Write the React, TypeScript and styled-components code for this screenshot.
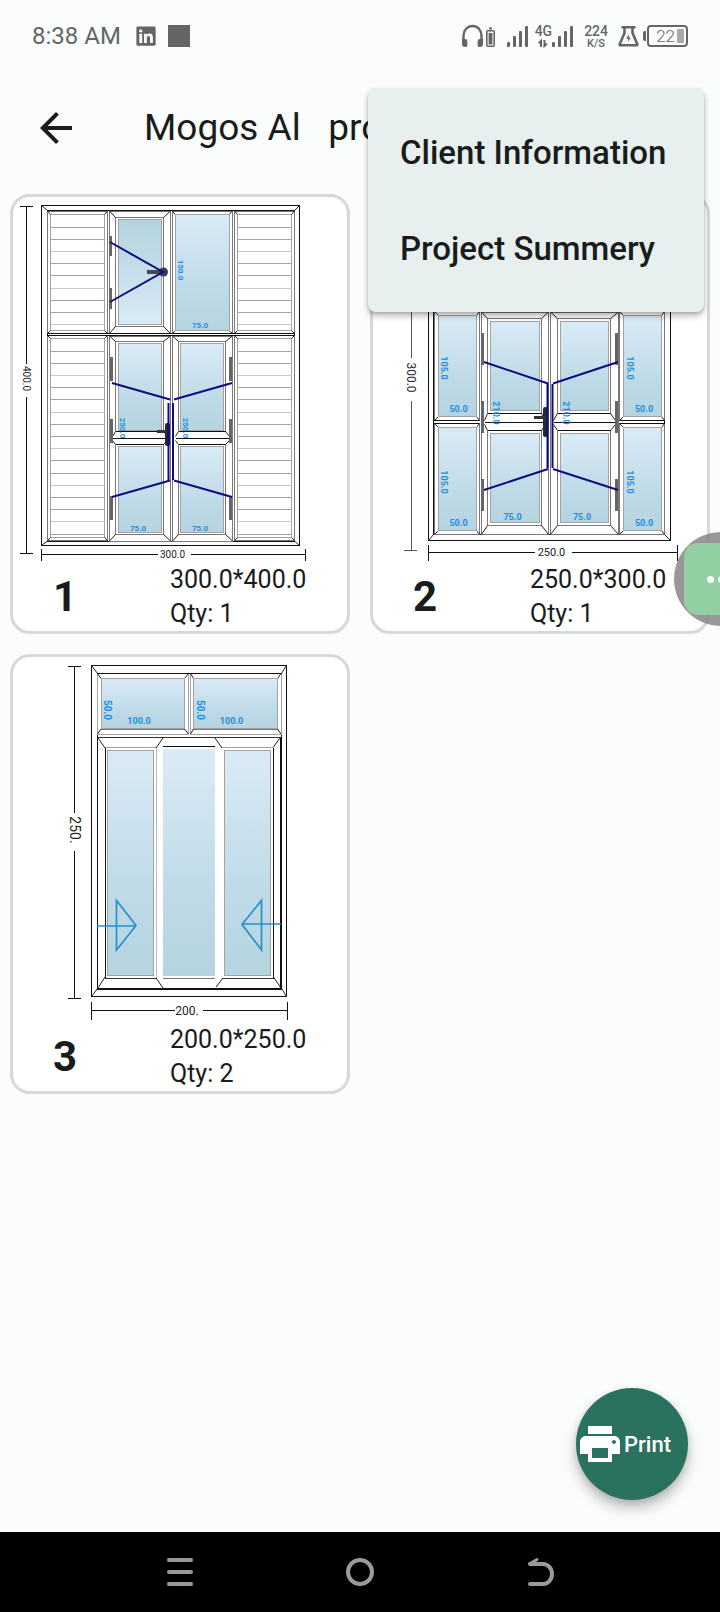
import React from "react";
import styled, { createGlobalStyle } from "styled-components";
import { MdArrowBack, MdPrint } from "react-icons/md";
import { FaLinkedin } from "react-icons/fa";

const GlobalStyle = createGlobalStyle`
  *, *::before, *::after { box-sizing: border-box; }
  body { margin: 0; background: #fbfdfc; font-family: Roboto, "Liberation Sans", sans-serif; color: #191c1b; }
  button { font: inherit; color: inherit; border: 0; padding: 0; background: none; cursor: pointer; }
`;

const Screen = styled.div`
  position: relative;
  display: flex;
  flex-direction: column;
  min-height: 100vh;
  overflow: hidden;
  background: #fbfdfc;
`;

const StatusBar = styled.div`
  display: flex;
  align-items: center;
  justify-content: space-between;
  height: 72px;
  padding: 0 32px;
  color: #646665;
`;

const StatusGroup = styled.div<{ $gap: number }>`
  display: flex;
  align-items: center;
  gap: ${(p) => p.$gap}px;
`;

const Clock = styled.time`
  margin-right: 3px;
  font-size: 24px;
  line-height: 28px;
`;

const AppSquare = styled.span`
  width: 22px;
  height: 22px;
  background: #646665;
`;

const Stacked = styled.div`
  display: flex;
  flex-direction: column;
  align-items: center;
  padding-top: 2px;
  font-weight: 500;
  font-size: 14px;
  line-height: 14px;
`;

const Small = styled.span`
  font-size: 11px;
  line-height: 12px;
`;

const Battery = styled.div`
  display: flex;
  align-items: center;
  justify-content: flex-end;
  gap: 2px;
  width: 41px;
  height: 22px;
  margin-left: 4px;
  padding: 0 2px;
  border: 2px solid #646665;
  border-radius: 4px;
  font-size: 17px;
  line-height: 18px;
  font-weight: 300;
  position: relative;

  &::before {
    content: "";
    position: absolute;
    left: -6px;
    top: 4px;
    width: 3px;
    height: 10px;
    border-radius: 2px 0 0 2px;
    background: #646665;
  }

  &::after {
    content: "";
    width: 7px;
    height: 14px;
    background: #a9abaa;
  }
`;

const AppBar = styled.header`
  display: flex;
  align-items: center;
  gap: 64px;
  height: 112px;
  padding: 0 32px;
`;

const IconButton = styled.button`
  display: flex;
  flex: none;
  align-items: center;
  justify-content: center;
`;

const Title = styled.h1`
  margin: 0;
  font-size: 37px;
  line-height: 44px;
  font-weight: 400;
  white-space: pre;
  overflow: hidden;
`;

const Menu = styled.div`
  position: absolute;
  z-index: 3;
  top: 88px;
  right: 16px;
  display: flex;
  flex-direction: column;
  width: 336px;
  padding: 16px 0;
  border-radius: 8px;
  background: #e7f0ef;
  box-shadow: 0 4px 6px rgba(0, 0, 0, 0.28), 0 1px 3px rgba(0, 0, 0, 0.12);
`;

const MenuItem = styled.button`
  height: 96px;
  padding: 0 32px;
  font-size: 33px;
  font-weight: 500;
  text-align: left;
  white-space: nowrap;
`;

const Content = styled.main`
  flex: 1;
  display: grid;
  grid-template-columns: 1fr 1fr;
  align-content: start;
  gap: 20px;
  padding: 10px 10px 40px;
`;

const Card = styled.article`
  display: flex;
  flex-direction: column;
  border: 3px solid #d7d9d8;
  border-radius: 20px;
  background: #fff;
  overflow: hidden;
`;

const Drawing = styled.svg`
  display: block;
  width: 100%;
  height: 366px;
  font-family: Roboto, "Liberation Sans", sans-serif;
`;

const CardFooter = styled.div`
  display: grid;
  grid-template-columns: 47% 1fr;
  align-items: center;
`;

const CardNumber = styled.strong`
  padding-left: 40px;
  font-size: 42px;
  line-height: 48px;
  font-weight: 700;
`;

const CardLine = styled.div`
  font-size: 25px;
  line-height: 34px;
  white-space: nowrap;
`;

const Bubble = styled.button`
  position: absolute;
  z-index: 2;
  top: 532px;
  right: -48px;
  display: flex;
  align-items: center;
  justify-content: center;
  width: 94px;
  height: 94px;
  border-radius: 50%;
  background: rgba(130, 128, 128, 0.82);
`;

const BubbleFace = styled.span`
  display: flex;
  align-items: center;
  justify-content: center;
  gap: 4px;
  width: 74px;
  height: 72px;
  border-radius: 14px;
  background: #92cfa3;
`;

const Dot = styled.span`
  width: 7px;
  height: 7px;
  border-radius: 50%;
  background: #fff;
`;

const PrintButton = styled.button`
  position: absolute;
  z-index: 2;
  right: 32px;
  bottom: 112px;
  display: flex;
  align-items: center;
  width: 112px;
  height: 112px;
  border-radius: 50%;
  background: #2a725f;
  color: #fff;
  font-size: 22px;
  font-weight: 500;
  box-shadow: 0 8px 14px rgba(0, 0, 0, 0.26), 0 2px 6px rgba(0, 0, 0, 0.1);

  svg { flex: none; }
`;

const SystemNav = styled.nav`
  display: grid;
  grid-template-columns: repeat(3, 1fr);
  height: 80px;
  padding: 0 12.5%;
  background: #000;
`;

/* ---------- Drawing parts ---------- */

type Box = { x1: number; y1: number; x2: number; y2: number };

const INK = "#111";
const MID = "#777";
const SOFT = "#a3a3a3";
const BLUE = "#1e90dc";
const NAVY = "#120a80";

const Outline = ({ x1, y1, x2, y2, c = INK }: Box & { c?: string }) => (
  <rect x={x1} y={y1} width={x2 - x1} height={y2 - y1} fill="none" stroke={c} shapeRendering="crispEdges" />
);

const Seg = ({ x1, y1, x2, y2, c = INK, w = 1 }: Box & { c?: string; w?: number }) => (
  <line x1={x1} y1={y1} x2={x2} y2={y2} stroke={c} strokeWidth={w} shapeRendering={x1 === x2 || y1 === y2 ? "crispEdges" : "auto"} />
);

const Glass = ({ x1, y1, x2, y2, flip, bare }: Box & { flip?: boolean; bare?: boolean }) => (
  <rect x={x1} y={y1} width={x2 - x1} height={y2 - y1} fill={flip ? "url(#glassUp)" : "url(#glassDown)"} stroke={bare ? "none" : SOFT} strokeWidth={1} shapeRendering="crispEdges" />
);

/* Mitred border: outer and inner rectangles joined at the corners. */
const Mitre = ({ o, i, oc = INK, ic = INK }: { o: Box; i: Box; oc?: string; ic?: string }) => (
  <g>
    <Outline {...o} c={oc} />
    <Outline {...i} c={ic} />
    <path
      d={`M${o.x1} ${o.y1}L${i.x1} ${i.y1}M${o.x2} ${o.y1}L${i.x2} ${i.y1}M${o.x1} ${o.y2}L${i.x1} ${i.y2}M${o.x2} ${o.y2}L${i.x2} ${i.y2}`}
      stroke="#222"
      strokeWidth="1"
      fill="none"
    />
  </g>
);

const box = (x1: number, y1: number, x2: number, y2: number): Box => ({ x1, y1, x2, y2 });

const Tag = ({ x, y, t, size = 8, turn, c = BLUE, weight = 700 }: { x: number; y: number; t: string; size?: number; turn?: boolean; c?: string; weight?: number }) => (
  <text
    x={x}
    y={y}
    transform={turn ? `rotate(90 ${x} ${y})` : undefined}
    fontSize={size}
    fontWeight={weight}
    fill={c}
    textAnchor="middle"
    dominantBaseline="central"
  >
    {t}
  </text>
);

const DimV = ({ x, y1, y2, g1, g2, t, size, c = INK }: { x: number; y1: number; y2: number; g1: number; g2: number; t: string; size: number; c?: string }) => (
  <g>
    <Seg x1={x} y1={y1} x2={x} y2={g1} c={c} />
    <Seg x1={x} y1={g2} x2={x} y2={y2} c={c} />
    <Seg x1={x - 7} y1={y1} x2={x + 6} y2={y1} c={c} />
    <Seg x1={x - 7} y1={y2} x2={x + 6} y2={y2} c={c} />
    <Tag x={x} y={(g1 + g2) / 2 - 2} t={t} size={size} turn c="#222" weight={400} />
  </g>
);

const DimH = ({ y, x1, x2, g1, g2, t, size, h = 7 }: { y: number; x1: number; x2: number; g1: number; g2: number; t: string; size: number; h?: number }) => (
  <g>
    <Seg x1={x1} y1={y} x2={g1} y2={y} />
    <Seg x1={g2} y1={y} x2={x2} y2={y} />
    <Seg x1={x1} y1={y - h} x2={x1} y2={y + h} />
    <Seg x1={x2} y1={y - h} x2={x2} y2={y + h} />
    <Tag x={(g1 + g2) / 2 - 2} y={y} t={t} size={size} c="#222" weight={400} />
  </g>
);

const Louver = ({ o, i, step = 12.2 }: { o: Box; i: Box; step?: number }) => {
  const rows: number[] = [];
  for (let y = i.y1 + step; y < i.y2 - 2; y += step) rows.push(Math.round(y));
  return (
    <g>
      <Mitre o={o} i={i} oc={MID} ic={SOFT} />
      {rows.map((y, n) => (
        <Seg key={y} x1={i.x1} y1={y} x2={i.x2} y2={y} c={n % 3 === 2 ? "#c8c8c8" : SOFT} />
      ))}
    </g>
  );
};

const Hinge = ({ x, y, h }: { x: number; y: number; h: number }) => (
  <rect x={x} y={y} width={3} height={h} fill="#666" />
);

const Fold = ({ d }: { d: string }) => <path d={d} fill="none" stroke={NAVY} strokeWidth="2" />;

const DoorLeaf = ({ o, i, gx1, gx2, gy, rail, hingeX, hinges, hingeH }: {
  o: Box; i: Box; gx1: number; gx2: number; gy: number[]; rail: number[]; hingeX: number; hinges: number[]; hingeH: number;
}) => (
  <g>
    <Mitre o={o} i={i} oc={MID} ic={MID} />
    <rect x={i.x1 - 3} y={rail[0]} width={i.x2 - i.x1 + 6} height={rail[2] - rail[0]} fill="#fff" />
    <Seg x1={i.x1} y1={rail[0]} x2={i.x2} y2={rail[0]} />
    <Seg x1={o.x1 + 3} y1={rail[1]} x2={o.x2 - 3} y2={rail[1]} />
    <Seg x1={i.x1} y1={rail[2]} x2={i.x2} y2={rail[2]} />
    <path
      d={`M${i.x1} ${rail[0]}L${o.x1 + 3} ${rail[1] - 2}M${i.x2} ${rail[0]}L${o.x2 - 3} ${rail[1] - 2}M${i.x1} ${rail[2]}L${o.x1 + 3} ${rail[1] + 2}M${i.x2} ${rail[2]}L${o.x2 - 3} ${rail[1] + 2}`}
      stroke="#222"
    />
    <Glass x1={gx1} y1={gy[0]} x2={gx2} y2={gy[1]} />
    <Glass x1={gx1} y1={gy[2]} x2={gx2} y2={gy[3]} />
    {hinges.map((y) => <Hinge key={y} x={hingeX} y={y} h={hingeH} />)}
  </g>
);

const GlassDefs = () => (
  <defs>
    <linearGradient id="glassDown" x1="0" y1="0" x2="0" y2="1">
      <stop offset="0" stopColor="#daebf6" />
      <stop offset="0.65" stopColor="#bedae7" />
      <stop offset="1" stopColor="#b6d3e0" />
    </linearGradient>
    <linearGradient id="glassUp" x1="0" y1="1" x2="0" y2="0">
      <stop offset="0" stopColor="#daebf6" />
      <stop offset="0.65" stopColor="#bedae7" />
      <stop offset="1" stopColor="#b6d3e0" />
    </linearGradient>
  </defs>
);

const LouverDoor = () => (
  <Drawing viewBox="13 197 334 366" role="img" aria-label="Door with louvers, 300 by 400">
    <GlassDefs />
    <Mitre o={box(41.5, 205.5, 299.5, 545.5)} i={box(47.5, 210.5, 294.5, 541)} />
    <Louver o={box(47.5, 211, 107.5, 333.5)} i={box(50.5, 214.5, 104.5, 330.5)} />
    <Louver o={box(234.5, 211, 294.5, 333.5)} i={box(237.5, 214.5, 291.5, 330.5)} />
    <Louver o={box(47.5, 335.5, 107.5, 540.5)} i={box(50.5, 338.5, 104.5, 537.5)} />
    <Louver o={box(234.5, 335.5, 294.5, 540.5)} i={box(237.5, 338.5, 291.5, 537.5)} />

    <Mitre o={box(109.5, 211, 170.5, 333.5)} i={box(115.5, 217.5, 163.5, 326.5)} oc={MID} ic={MID} />
    <Glass x1={118.5} y1={219.5} x2={161.5} y2={324.5} flip />
    <Mitre o={box(172.5, 211, 232.5, 333.5)} i={box(175, 214.5, 229, 330.5)} oc={MID} ic={SOFT} />
    <Glass x1={175} y1={214.5} x2={229} y2={330.5} />
    <Seg x1={47} y1={333.5} x2={295} y2={333.5} />
    <Seg x1={47} y1={335.5} x2={295} y2={335.5} />
    <Hinge x={109} y={236} h={20} />
    <Hinge x={109} y={288} h={21} />
    <rect x="147" y="270" width="14" height="4" fill="#444b50" />
    <circle cx="163.5" cy="272" r="4.5" fill="#3a3a5c" />
    <Fold d="M110 242L163 272L110 302" />

    <DoorLeaf o={box(109.5, 336, 170.5, 541)} i={box(115.5, 341.5, 163.5, 534.5)} gx1={118.5} gx2={161.5} gy={[343.5, 430, 446.5, 532.5]} rail={[431.5, 438.5, 444.5]} hingeX={110} hinges={[357, 419, 496]} hingeH={24} />
    <DoorLeaf o={box(172.5, 336, 232.5, 541)} i={box(178.5, 341.5, 225.5, 534.5)} gx1={180.5} gx2={223.5} gy={[343.5, 430, 446.5, 532.5]} rail={[431.5, 438.5, 444.5]} hingeX={229} hinges={[357, 419, 496]} hingeH={24} />
    <Fold d="M112 383L170 399.5M112 497L170 480.5M174 399.5L232 383M174 480.5L232 497" />
    <rect x="165" y="423" width="5" height="23" rx="2" fill="#26263c" />
    <rect x="157" y="430" width="10" height="3" fill="#333" />
    <Fold d="M168.5 403V480M173 403V480" />

    <Tag x={180.5} y={270} t="150.0" turn />
    <Tag x={200} y={325} t="75.0" />
    <Tag x={122.5} y={428} t="250.0" turn />
    <Tag x={185} y={428} t="250.0" turn />
    <Tag x={138} y={528} t="75.0" />
    <Tag x={200} y={528} t="75.0" />
    <DimV x={26.5} y1={206} y2={553.5} g1={364} g2={397} t="400.0" size={10} />
    <DimH y={554.5} x1={41.5} x2={305.5} g1={158} g2={191} t="300.0" size={10} h={6} />
  </Drawing>
);

const SidePane = ({ x, top, bottom }: { x: number; top: number; bottom: number }) => (
  <g>
    <Mitre o={box(x, top, x + 45, bottom)} i={box(x + 4, top + 4, x + 42, bottom - 4)} oc={MID} ic={MID} />
    <Glass x1={x + 4} y1={top + 4} x2={x + 42} y2={bottom - 4} />
  </g>
);

const DoubleDoor = () => (
  <Drawing viewBox="373 197 334 366" role="img" aria-label="Double door, 250 by 300">
    <GlassDefs />
    <Mitre o={box(428.5, 205.5, 670.5, 540.5)} i={box(433.5, 211.5, 664.5, 534.5)} />
    <Glass x1={439} y1={216.5} x2={660} y2={306} />
    <SidePane x={434.5} top={311.5} bottom={420.5} />
    <SidePane x={434.5} top={423.5} bottom={534.5} />
    <SidePane x={619.5} top={311.5} bottom={420.5} />
    <SidePane x={619.5} top={423.5} bottom={534.5} />
    <Seg x1={434} y1={420.5} x2={479} y2={420.5} />
    <Seg x1={434} y1={423.5} x2={479} y2={423.5} />
    <Seg x1={620} y1={420.5} x2={665} y2={420.5} />
    <Seg x1={620} y1={423.5} x2={665} y2={423.5} />
    <DoorLeaf o={box(481.5, 312, 548.5, 534.5)} i={box(487.5, 318.5, 541.5, 525.5)} gx1={490.5} gx2={539.5} gy={[321.5, 410.5, 433.5, 522.5]} rail={[413.5, 422.5, 430.5]} hingeX={481} hinges={[333, 401, 479]} hingeH={32} />
    <DoorLeaf o={box(550.5, 312, 618.5, 534.5)} i={box(557.5, 318.5, 610.5, 525.5)} gx1={560.5} gx2={608.5} gy={[321.5, 410.5, 433.5, 522.5]} rail={[413.5, 422.5, 430.5]} hingeX={615} hinges={[333, 401, 479]} hingeH={32} />
    <Fold d="M484 362L548 383.5M484 490L548 469M553 383.5L618 362M553 469L618 490" />
    <rect x="543" y="407" width="5" height="30" rx="2" fill="#26263c" />
    <rect x="534" y="416" width="12" height="3" fill="#333" />
    <Fold d="M547.5 384V468M552.5 384V468" />

    {[368, 482].map((y) => (
      <g key={y}>
        <Tag x={444} y={y} t="105.0" size={9} turn />
        <Tag x={630} y={y} t="105.0" size={9} turn />
        <Tag x={458.5} y={y + 41} t="50.0" size={9} />
        <Tag x={644} y={y + 41} t="50.0" size={9} />
      </g>
    ))}
    <Tag x={496} y={413} t="210.0" size={9} turn />
    <Tag x={565.5} y={413} t="210.0" size={9} turn />
    <Tag x={512.5} y={517} t="75.0" size={9} />
    <Tag x={582} y={517} t="75.0" size={9} />
    <DimV x={411} y1={206} y2={550.5} g1={358} g2={401} t="300.0" size={12} c="#555" />
    <DimH y={552.5} x1={428.5} x2={677.5} g1={535} g2={572} t="250.0" size={11} h={8} />
  </Drawing>
);

const SlidingWindow = () => (
  <Drawing viewBox="13 657 334 366" role="img" aria-label="Sliding window, 200 by 250">
    <GlassDefs />
    <Mitre o={box(91.5, 665.5, 286.5, 996.5)} i={box(97.5, 673.5, 281.5, 988.5)} />
    <Seg x1={97} y1={988.5} x2={282} y2={988.5} w={2} />
    <Seg x1={281} y1={737} x2={281} y2={989} w={2} />
    <Mitre o={box(97.5, 673.5, 188.5, 734)} i={box(101, 678.5, 184.5, 729)} oc={SOFT} ic={MID} />
    <Mitre o={box(190.5, 673.5, 281, 734)} i={box(193.5, 678.5, 277.5, 729)} oc={SOFT} ic={MID} />
    <Seg x1={97} y1={673.5} x2={282} y2={673.5} />
    <Glass x1={101.5} y1={678.5} x2={184.5} y2={728.5} />
    <Glass x1={193.5} y1={678.5} x2={277.5} y2={728.5} />
    <Seg x1={97} y1={737.5} x2={281} y2={737.5} c="#333" />

    <Seg x1={105} y1={747} x2={105} y2={978} />
    <Seg x1={273.5} y1={747} x2={273.5} y2={978} />
    <Seg x1={105} y1={747} x2={156.5} y2={747} c={SOFT} />
    <Seg x1={222} y1={747} x2={273.5} y2={747} c={SOFT} />
    <Seg x1={105} y1={978} x2={156.5} y2={978} c="#333" />
    <Seg x1={222.5} y1={978} x2={273.5} y2={978} c="#333" />
    <Seg x1={156.5} y1={747} x2={156.5} y2={978} c="#bbb" />
    <Seg x1={163} y1={746.5} x2={215} y2={746.5} />
    <Seg x1={163} y1={978} x2={215} y2={978} c={MID} />
    <path d="M98 738L105 748M163 738L156 748M215 738L222 748M280 738L273.5 747M98 988L105 977M156 978L163 988M223 978L216 987M273.5 977L281 988" stroke="#222" />
    <Glass x1={107.5} y1={750.5} x2={153.5} y2={975} />
    <Glass x1={163} y1={749} x2={215} y2={975.5} bare />
    <Glass x1={224.5} y1={750.5} x2={270.5} y2={975} />
    <path d="M116.5 900.5V950L136 925.5ZM97 926H136M261.5 900.5V950L242 924.5ZM281 924H242" fill="none" stroke="#2590cc" strokeWidth="1.7" />

    <Tag x={107.5} y={710} t="50.0" size={10} turn />
    <Tag x={200.5} y={710} t="50.0" size={10} turn />
    <Tag x={139} y={721} t="100.0" size={9} />
    <Tag x={231.5} y={721} t="100.0" size={9} />
    <DimV x={74.5} y1={666.5} y2={998.5} g1={813} g2={851} t="250." size={14} />
    <DimH y={1010.5} x1={91.5} x2={287.5} g1={175} g2={203} t="200." size={12} h={9} />
  </Drawing>
);

/* ---------- Status and navigation glyphs ---------- */

const SignalIcon = () => (
  <svg width="22" height="22" viewBox="0 0 22 22" fill="#646665" aria-hidden="true">
    <rect x="0" y="17" width="3" height="5" rx="1" />
    <rect x="6" y="11" width="3" height="11" rx="1" />
    <rect x="12" y="6" width="3" height="16" rx="1" />
    <rect x="18" y="1" width="3" height="21" rx="1" />
  </svg>
);

const HeadphoneIcon = () => (
  <svg width="36" height="24" viewBox="0 0 36 24" fill="none" stroke="#646665" aria-hidden="true">
    <path d="M2.5 17V11.5a9 9.5 0 0 1 18 0V17" strokeWidth="2.4" />
    <path d="M1 15h3a2.4 2.4 0 0 1 2.4 2.4v3A2.4 2.4 0 0 1 4 23a3 3 0 0 1-3-3zM22 15h-3a2.4 2.4 0 0 0-2.4 2.4v3A2.4 2.4 0 0 0 19 23a3 3 0 0 0 3-3z" fill="#646665" stroke="none" />
    <rect x="25.8" y="6.8" width="7.4" height="15.4" rx="1" strokeWidth="1.6" />
    <path d="M28 4.5h3" strokeWidth="2" />
    <rect x="27.6" y="9" width="3.8" height="11.5" fill="#646665" stroke="none" />
  </svg>
);

const FlaskIcon = () => (
  <svg width="21" height="22" viewBox="0 0 21 22" fill="none" stroke="#646665" aria-hidden="true">
    <path d="M4.5 2.2H16.5" strokeWidth="2.4" strokeLinecap="round" />
    <path d="M6.5 2.5V8L2 18.5a1 1 0 0 0 1 1.7H18a1 1 0 0 0 1-1.7L14.5 8V2.5" strokeWidth="2.6" strokeLinejoin="round" />
    <path d="M11.2 9L8 13.8h2.2L9.8 17l3-4.4H10.8z" fill="#646665" stroke="none" />
  </svg>
);

const DataArrows = () => (
  <svg width="10" height="12" viewBox="0 -2 10 12" fill="none" stroke="#646665" strokeWidth="2" aria-hidden="true">
    <path d="M0.8 3.2L3 1V7M6.5 0V6L9 3.6" />
  </svg>
);

const cards = [
  { n: 1, size: "300.0*400.0", qty: 1, Picture: LouverDoor },
  { n: 2, size: "250.0*300.0", qty: 1, Picture: DoubleDoor },
  { n: 3, size: "200.0*250.0", qty: 2, Picture: SlidingWindow },
];

export default function App() {
  return (
    <>
      <GlobalStyle />
      <Screen>
        <StatusBar>
          <StatusGroup $gap={11}>
            <Clock>8:38 AM</Clock>
            <FaLinkedin size={22} />
            <AppSquare />
          </StatusGroup>
          <StatusGroup $gap={10}>
            <HeadphoneIcon />
            <StatusGroup $gap={6}>
              <SignalIcon />
              <StatusGroup $gap={0}>
                <Stacked>
                  4G
                  <DataArrows />
                </Stacked>
                <SignalIcon />
              </StatusGroup>
            </StatusGroup>
            <Stacked>
              224
              <Small>K/S</Small>
            </Stacked>
            <StatusGroup $gap={4}>
              <FlaskIcon />
              <Battery>22</Battery>
            </StatusGroup>
          </StatusGroup>
        </StatusBar>

        <AppBar>
          <IconButton aria-label="Back">
            <MdArrowBack size={48} />
          </IconButton>
          <Title>{"Mogos Al   project"}</Title>
        </AppBar>

        <Menu role="menu">
          <MenuItem role="menuitem">Client Information</MenuItem>
          <MenuItem role="menuitem">Project Summery</MenuItem>
        </Menu>

        <Content>
          {cards.map(({ n, size, qty, Picture }) => (
            <Card key={n}>
              <Picture />
              <CardFooter>
                <CardNumber>{n}</CardNumber>
                <div>
                  <CardLine>{size}</CardLine>
                  <CardLine>Qty: {qty}</CardLine>
                </div>
              </CardFooter>
            </Card>
          ))}
        </Content>

        <Bubble aria-label="More tools">
          <BubbleFace>
            <Dot />
            <Dot />
            <Dot />
          </BubbleFace>
        </Bubble>

        <PrintButton>
          <MdPrint size={48} />
          Print
        </PrintButton>

        <SystemNav>
          <IconButton aria-label="Recent apps">
            <svg width="28" height="28" viewBox="0 0 28 28" stroke="#9a9a9a" strokeWidth="4" strokeLinecap="round">
              <path d="M3 2H25M3 14H25M3 26H25" />
            </svg>
          </IconButton>
          <IconButton aria-label="Home">
            <svg width="28" height="28" viewBox="0 0 28 28" fill="none" stroke="#9a9a9a" strokeWidth="4">
              <circle cx="14" cy="14" r="12" />
            </svg>
          </IconButton>
          <IconButton aria-label="Previous screen">
            <svg width="28" height="28" viewBox="0 0 28 28" fill="none" stroke="#9a9a9a" strokeWidth="4" strokeLinecap="round" strokeLinejoin="round">
              <path d="M4 26H17a9 10 0 0 0 0-20H4" />
              <path d="M4 5.5L11 1.6" strokeWidth="3" />
            </svg>
          </IconButton>
        </SystemNav>
      </Screen>
    </>
  );
}
